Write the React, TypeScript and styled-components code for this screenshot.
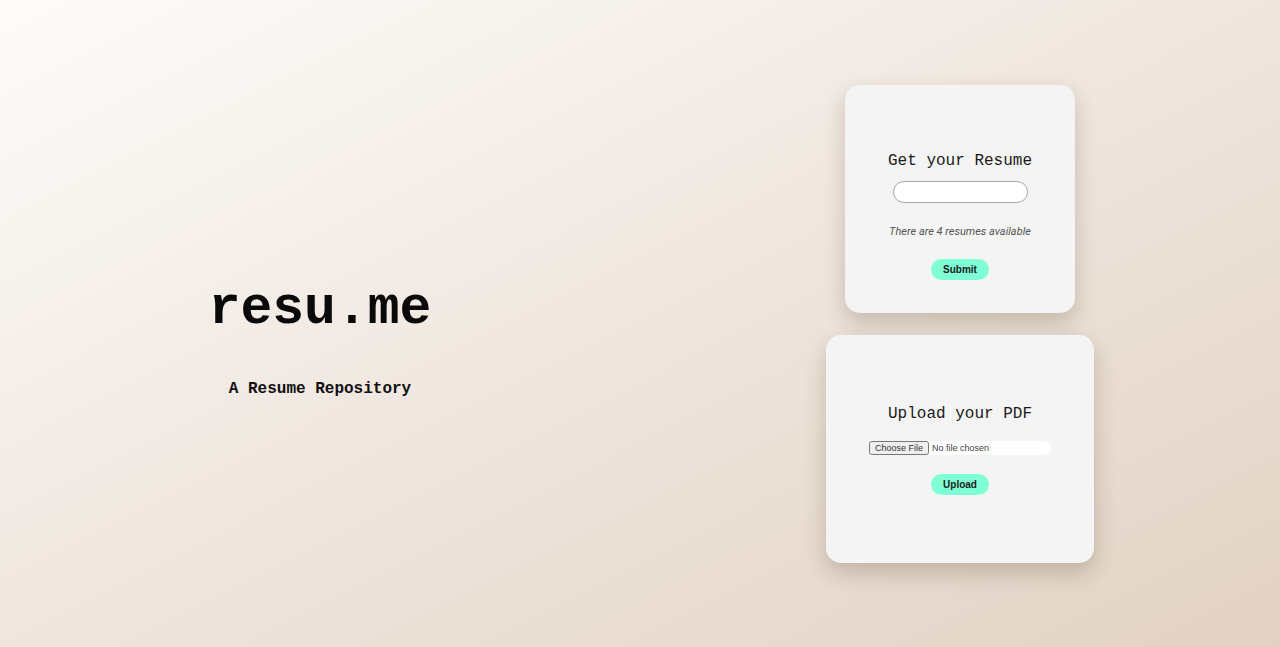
import React from "react";
import styled, { createGlobalStyle } from "styled-components";

const GlobalStyle = createGlobalStyle`
  html, body { margin: 0; padding: 0; }
  body {
    font-family: "Liberation Sans", Arial, sans-serif;
    background: linear-gradient(to bottom right, #fdfcfa 0%, #efe6de 50%, #e2d2c3 100%);
    min-height: 100vh;
  }
`;

const Page = styled.main`
  display: grid;
  grid-template-columns: 1fr 1fr;
  height: 647px;
`;

const Hero = styled.section`
  display: flex;
  flex-direction: column;
  align-items: center;
  justify-content: center;
  padding-top: 34px;
`;

const Title = styled.h1`
  margin: 0;
  font-family: "Liberation Mono", monospace;
  font-weight: 700;
  font-size: 53px;
  line-height: 53px;
  color: #0a0a0a;
`;

const Tagline = styled.p`
  margin: 43px 0 0;
  font-family: "Liberation Mono", monospace;
  font-weight: 700;
  font-size: 16px;
  line-height: 20px;
  color: #111;
`;

const Stack = styled.section`
  display: flex;
  flex-direction: column;
  align-items: center;
  justify-content: center;
  gap: 22px;
`;

const Card = styled.form<{ $top: number }>`
  box-sizing: border-box;
  height: 228px;
  padding: ${(p) => p.$top}px 43px 0;
  background: #f4f4f4;
  border-radius: 15px;
  box-shadow: 0 10px 22px rgba(60, 40, 20, 0.22);
  display: flex;
  flex-direction: column;
  align-items: center;
  justify-content: flex-start;
`;

const Heading = styled.h2`
  margin: 0;
  font-family: "Liberation Mono", monospace;
  font-weight: 400;
  font-size: 16px;
  line-height: 20px;
  color: #1a1a1a;
  white-space: nowrap;
`;

const TextInput = styled.input`
  box-sizing: border-box;
  margin-top: 10px;
  width: 135px;
  height: 22px;
  border: 1px solid #a9a9a9;
  border-radius: 11px;
  background: #fff;
  outline: none;
`;

const Note = styled.p`
  margin: 22px 0 0;
  font-family: Roboto, "Liberation Sans", sans-serif;
  font-style: italic;
  font-size: 11px;
  line-height: 14px;
  color: #555;
  white-space: nowrap;
`;

const FileInput = styled.input`
  box-sizing: border-box;
  margin-top: 17px;
  width: 182px;
  height: 14px;
  padding: 0;
  border: none;
  background: #fff;
  border-radius: 0 7px 7px 0;
  font-family: "Liberation Sans", Arial, sans-serif;
  font-size: 9px;
  color: #444;
  &::file-selector-button {
    font: inherit;
    height: 14px;
    padding: 0 4px;
    margin-right: 3px;
    color: #333;
  }
`;

const Action = styled.button<{ $gap: number }>`
  margin-top: ${(p) => p.$gap}px;
  width: 58px;
  height: 21px;
  border: none;
  border-radius: 10.5px;
  background: #7fffd4;
  font-family: "Liberation Sans", Arial, sans-serif;
  font-weight: 700;
  font-size: 10px;
  color: #1a1a1a;
  cursor: pointer;
`;

export default function App() {
  return (
    <>
      <GlobalStyle />
      <Page>
        <Hero>
          <Title>resu.me</Title>
          <Tagline>A Resume Repository</Tagline>
        </Hero>
        <Stack>
          <Card $top={66} onSubmit={(e) => e.preventDefault()}>
            <Heading>Get your Resume</Heading>
            <TextInput type="text" />
            <Note>There are 4 resumes available</Note>
            <Action $gap={20} type="submit">Submit</Action>
          </Card>
          <Card $top={69} onSubmit={(e) => e.preventDefault()}>
            <Heading>Upload your PDF</Heading>
            <FileInput type="file" accept="application/pdf" />
            <Action $gap={19} type="submit">Upload</Action>
          </Card>
        </Stack>
      </Page>
    </>
  );
}
